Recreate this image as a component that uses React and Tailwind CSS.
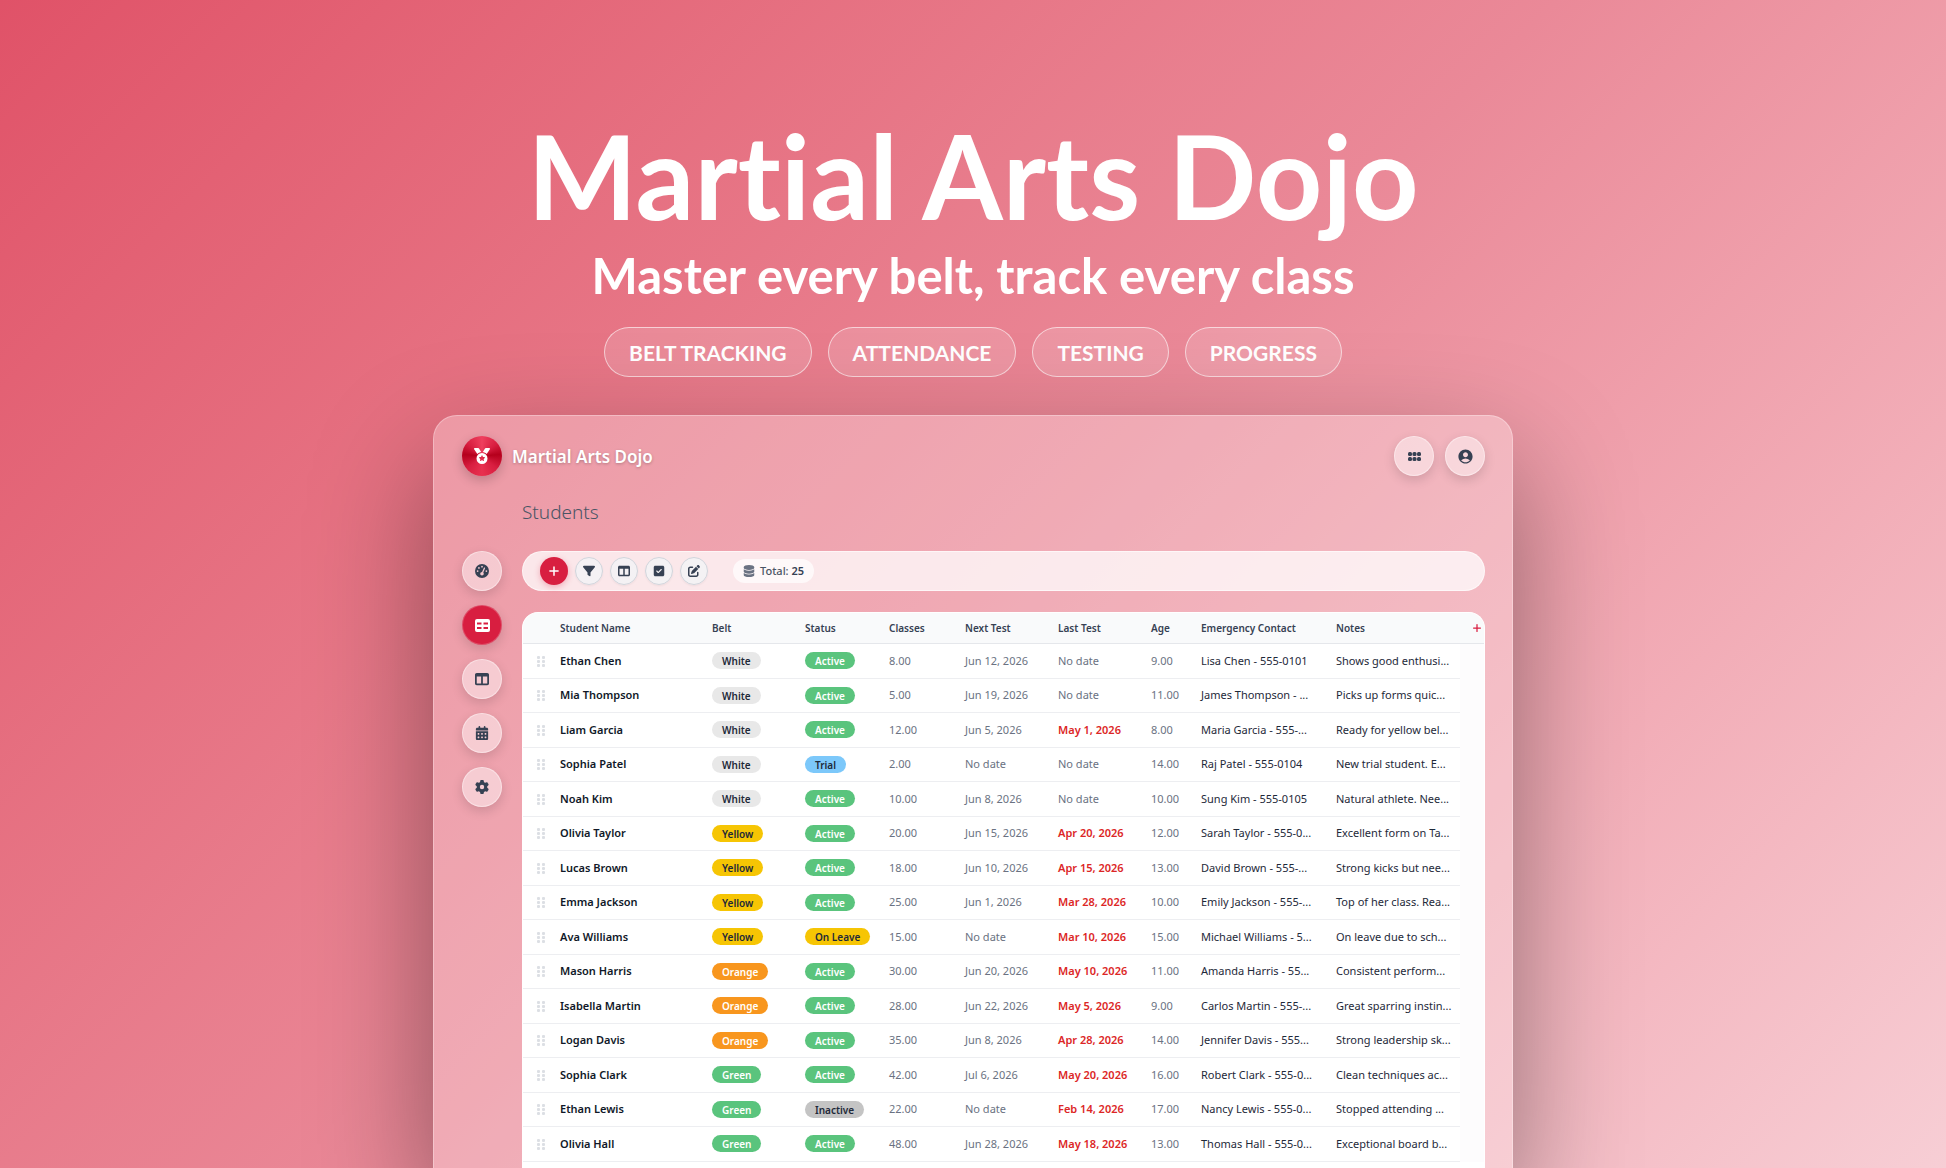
import React, { useState } from 'react';
import {
  FaCalendarDays,
  FaDatabase,
  FaFilter,
  FaGaugeHigh,
  FaGear,
  FaMedal,
  FaPenToSquare,
  FaPlus,
  FaSquareCheck,
  FaTableColumns,
} from 'react-icons/fa6';
import { MdAccountCircle } from 'react-icons/md';

const tags = ["BELT TRACKING", "ATTENDANCE", "TESTING", "PROGRESS"];

const columns = ["Student Name", "Belt", "Status", "Classes", "Next Test", "Last Test", "Age", "Emergency Contact", "Notes"];

const students = [
  ["Ethan Chen", "White", "Active", "8.00", "Jun 12, 2026", "", "9.00", "Lisa Chen - 555-0101", "Shows good enthusi..."],
  ["Mia Thompson", "White", "Active", "5.00", "Jun 19, 2026", "", "11.00", "James Thompson - ...", "Picks up forms quic..."],
  ["Liam Garcia", "White", "Active", "12.00", "Jun 5, 2026", "May 1, 2026", "8.00", "Maria Garcia - 555-...", "Ready for yellow bel..."],
  ["Sophia Patel", "White", "Trial", "2.00", "", "", "14.00", "Raj Patel - 555-0104", "New trial student. E..."],
  ["Noah Kim", "White", "Active", "10.00", "Jun 8, 2026", "", "10.00", "Sung Kim - 555-0105", "Natural athlete. Nee..."],
  ["Olivia Taylor", "Yellow", "Active", "20.00", "Jun 15, 2026", "Apr 20, 2026", "12.00", "Sarah Taylor - 555-0...", "Excellent form on Ta..."],
  ["Lucas Brown", "Yellow", "Active", "18.00", "Jun 10, 2026", "Apr 15, 2026", "13.00", "David Brown - 555-...", "Strong kicks but nee..."],
  ["Emma Jackson", "Yellow", "Active", "25.00", "Jun 1, 2026", "Mar 28, 2026", "10.00", "Emily Jackson - 555-...", "Top of her class. Rea..."],
  ["Ava Williams", "Yellow", "On Leave", "15.00", "", "Mar 10, 2026", "15.00", "Michael Williams - 5...", "On leave due to sch..."],
  ["Mason Harris", "Orange", "Active", "30.00", "Jun 20, 2026", "May 10, 2026", "11.00", "Amanda Harris - 55...", "Consistent perform..."],
  ["Isabella Martin", "Orange", "Active", "28.00", "Jun 22, 2026", "May 5, 2026", "9.00", "Carlos Martin - 555-...", "Great sparring instin..."],
  ["Logan Davis", "Orange", "Active", "35.00", "Jun 8, 2026", "Apr 28, 2026", "14.00", "Jennifer Davis - 555...", "Strong leadership sk..."],
  ["Sophia Clark", "Green", "Active", "42.00", "Jul 6, 2026", "May 20, 2026", "16.00", "Robert Clark - 555-0...", "Clean techniques ac..."],
  ["Ethan Lewis", "Green", "Inactive", "22.00", "", "Feb 14, 2026", "17.00", "Nancy Lewis - 555-0...", "Stopped attending ..."],
  ["Olivia Hall", "Green", "Active", "48.00", "Jun 28, 2026", "May 18, 2026", "13.00", "Thomas Hall - 555-0...", "Exceptional board b..."],
];

const badgeColors = {
  White: "bg-[#e8e8e8] text-gray-800",
  Yellow: "bg-[#f6c504] text-gray-800",
  Orange: "bg-[#f8961e] text-white",
  Green: "bg-[#5ac47d] text-white",
  Active: "bg-[#5ac47d] text-white",
  Trial: "bg-[#7cc8fa] text-gray-800",
  "On Leave": "bg-[#f6c504] text-gray-800",
  Inactive: "bg-[#c4c4c4] text-gray-800",
};

const TableIcon = () => (
  <svg width="15" height="13" viewBox="0 0 15 13" aria-hidden="true">
    <path
      fillRule="evenodd"
      fill="currentColor"
      d="M2 0h11a2 2 0 0 1 2 2v9a2 2 0 0 1-2 2H2a2 2 0 0 1-2-2V2a2 2 0 0 1 2-2zM2 3.500v2h4.500v-2zM8.500 3.500v2H13v-2zM2 8v2h4.500V8zM8.500 8v2H13V8z"
    />
  </svg>
);

const DotsIcon = () => (
  <svg width="13" height="9" viewBox="0 0 13 9" fill="currentColor" aria-hidden="true">
    {[0, 4.500, 9].map((x) => [0, 5].map((y) => <rect key={`${x}-${y}`} x={x} y={y} width="4" height="4" rx="1.500" />))}
  </svg>
);

const GripIcon = () => (
  <svg width="8" height="11" viewBox="0 0 8 11" fill="currentColor" className="block" aria-hidden="true">
    {[0, 5].map((x) => [0, 4, 8].map((y) => <rect key={`${x}-${y}`} x={x} y={y} width="3" height="3" rx="1" />))}
  </svg>
);

const navItems = [
  { name: "Dashboard", icon: <FaGaugeHigh size={14} /> },
  { name: "Table", icon: <TableIcon /> },
  { name: "Board", icon: <FaTableColumns size={14} /> },
  { name: "Calendar", icon: <FaCalendarDays size={14} /> },
  { name: "Settings", icon: <FaGear size={14} /> },
];

const tools = [
  { name: "Filter", icon: <FaFilter size={12} /> },
  { name: "Columns", icon: <FaTableColumns size={12} /> },
  { name: "Select", icon: <FaSquareCheck size={12} /> },
  { name: "Edit", icon: <FaPenToSquare size={12} /> },
];

const RoundButton = ({ label, active, onClick, children }) => (
  <button
    type="button"
    aria-label={label}
    onClick={onClick}
    className={`flex size-10 shrink-0 items-center justify-center rounded-full border shadow-[0_4px_12px_rgba(0,0,0,0.14)] ${
      active ? "border-white/20 bg-[#d81e40] text-white" : "border-white/40 bg-white/45 text-gray-700"
    }`}
  >
    {children}
  </button>
);

const Badge = ({ label }) => (
  <span className={`inline-block h-[17px] rounded-full px-[10px] text-[10px] leading-[18px] font-semibold ${badgeColors[label]}`}>
    {label}
  </span>
);

const StudentRow = ({ student }) => {
  const [name, belt, status, classes, nextTest, lastTest, age, contact, notes] = student;
  const cell = "border-b border-gray-200/70 pl-[10px]";

  return (
    <tr className="odd:h-[35px] even:h-[34px]">
      <td className="border-b border-gray-200/70 pl-[14px] text-[#dcdfe4]"><GripIcon /></td>
      <td className={`${cell} font-semibold text-gray-900`}>{name}</td>
      <td className={cell}><Badge label={belt} /></td>
      <td className={cell}><Badge label={status} /></td>
      <td className={cell}>{classes}</td>
      <td className={cell}>{nextTest || "No date"}</td>
      <td className={`${cell} ${lastTest ? "font-semibold text-[#dc2626]" : ""}`}>{lastTest || "No date"}</td>
      <td className={cell}>{age}</td>
      <td className={`${cell} text-gray-800`}>{contact}</td>
      <td className={`${cell} text-gray-800`}>{notes}</td>
      <td className="bg-[#fdfcfd]" />
    </tr>
  );
};

const App = () => {
  const [view, setView] = useState("Table");

  return (
    <div className="flex h-screen flex-col items-center overflow-hidden bg-linear-135 from-[#e05268] via-[#ea8998] to-[#f7ced5] font-['Noto_Sans',sans-serif]">
      <header className="flex flex-col items-center pt-[104px] font-['Lato',sans-serif] font-bold text-white [font-variant-ligatures:none]">
        <h1 className="text-[116px] leading-[144px]">Martial Arts Dojo</h1>
        <p className="text-[49px] leading-[54px]">Master every belt, track every class</p>
        <ul className="mt-[25px] flex gap-4">
          {tags.map((tag) => (
            <li key={tag} className="rounded-full border border-white/60 bg-white/15 px-6 pt-[2px] text-[21px] leading-[46px]">
              {tag}
            </li>
          ))}
        </ul>
      </header>

      <main className="mt-[38px] flex w-full max-w-[1080px] flex-1 flex-col rounded-t-3xl border border-b-0 border-white/30 bg-white/28 pt-5 pr-[27px] pl-7 shadow-[0_50px_120px_rgba(0,0,0,0.4)]">
        <div className="flex items-center gap-[10px]">
          <div className="flex size-10 items-center justify-center rounded-full bg-[conic-gradient(#ef3f5e,#d81e40_50deg,#b5001c_85deg,#d81e40_130deg,#e8304f_180deg,#d81e40_230deg,#b5001c_275deg,#d81e40_310deg,#ef3f5e)] text-white shadow-[0_4px_12px_rgba(0,0,0,0.2)]">
            <FaMedal size={16} />
          </div>
          <span className="pt-[2px] text-[17px] font-semibold text-white [text-shadow:0_1px_3px_rgba(0,0,0,0.25)]">Martial Arts Dojo</span>
          <div className="ml-auto flex gap-[11px]">
            <RoundButton label="Apps"><DotsIcon /></RoundButton>
            <RoundButton label="Account"><MdAccountCircle size={17} /></RoundButton>
          </div>
        </div>

        <div className="flex flex-1 gap-5">
          <nav className="flex flex-col gap-[14px] pt-[75px]">
            {navItems.map((item) => (
              <RoundButton key={item.name} label={item.name} active={view === item.name} onClick={() => setView(item.name)}>
                {item.icon}
              </RoundButton>
            ))}
          </nav>

          <section className="flex min-w-0 flex-1 flex-col">
            <h2 className="mt-5 text-[19px] leading-8 font-light text-gray-600">Students</h2>

            <div className="mt-[23px] flex h-10 shrink-0 items-center gap-[7px] rounded-full border border-white/60 bg-white/75 pl-[17px]">
              <button type="button" aria-label="Add student" className="flex size-7 items-center justify-center rounded-full bg-[#d81e40] text-white shadow-[0_2px_6px_rgba(216,30,64,0.3)]">
                <FaPlus size={12} />
              </button>
              {tools.map((tool) => (
                <button key={tool.name} type="button" aria-label={tool.name} className="flex size-7 items-center justify-center rounded-full border border-gray-300 bg-gray-100/80 text-gray-700 shadow-xs">
                  {tool.icon}
                </button>
              ))}
              <div className="ml-[18px] flex h-6 items-center gap-[5px] rounded-full bg-white/70 px-[10px] text-[11px] font-medium text-gray-600">
                <FaDatabase size={12} className="text-gray-500" />
                <span>Total: <b className="font-semibold text-gray-700">25</b></span>
              </div>
            </div>

            <div className="mt-[21px] flex-1 overflow-hidden rounded-t-2xl border border-b-0 border-white bg-white">
              <table className="w-full table-fixed border-separate border-spacing-0 text-left text-[11px] whitespace-nowrap text-gray-500">
                <colgroup>
                  <col className="w-[27px]" />
                  <col className="w-[152px]" />
                  <col className="w-[93px]" />
                  <col className="w-[84px]" />
                  <col className="w-[76px]" />
                  <col className="w-[93px]" />
                  <col className="w-[93px]" />
                  <col className="w-[50px]" />
                  <col className="w-[135px]" />
                  <col />
                  <col className="w-[24px]" />
                </colgroup>
                <thead>
                  <tr className="h-[31px] bg-gray-50 text-[10px] text-gray-700">
                    <th className="border-b border-gray-200" />
                    {columns.map((column) => (
                      <th key={column} className="border-b border-gray-200 pl-[10px] font-semibold">{column}</th>
                    ))}
                    <th className="border-b border-gray-200 pl-3">
                      <button type="button" aria-label="Add column" className="block text-[#d81e40]"><FaPlus size={10} /></button>
                    </th>
                  </tr>
                </thead>
                <tbody>
                  {students.map((student) => (
                    <StudentRow key={student[0]} student={student} />
                  ))}
                </tbody>
              </table>
            </div>
          </section>
        </div>
      </main>
    </div>
  );
};

export default App;
